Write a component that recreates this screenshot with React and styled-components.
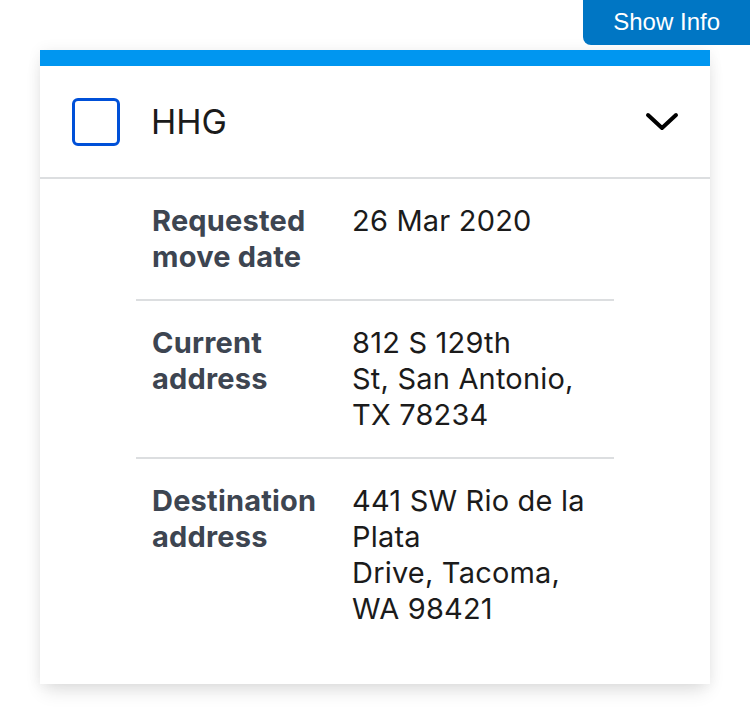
import React from "react";
import styled, { createGlobalStyle } from "styled-components";

const GlobalStyle = createGlobalStyle`
  body {
    margin: 0;
    background: #fff;
    font-family: Inter, "Noto Sans", sans-serif;
    color: #1b1b1b;
  }
`;

const rows = [
  { label: "Requested move date", value: ["26 Mar 2020"] },
  { label: "Current address", value: ["812 S 129th", "St, San Antonio, TX 78234"] },
  { label: "Destination address", value: ["441 SW Rio de la Plata", "Drive, Tacoma, WA 98421"] },
];

function App() {
  return (
    <Page>
      <GlobalStyle />
      <InfoButton>Show Info</InfoButton>
      <Card>
        <Header>
          <Checkbox type="checkbox" aria-label="HHG" />
          <Title>HHG</Title>
          <Toggle aria-label="Collapse">
            <svg width="36" height="22" viewBox="0 0 36 22">
              <polyline points="4,4 18,17 32,4" fill="none" stroke="#000" strokeWidth="4" strokeLinecap="round" strokeLinejoin="round" />
            </svg>
          </Toggle>
        </Header>
        <Body>
          <Table>
            <tbody>
              {rows.map((r) => (
                <Row key={r.label}>
                  <Label>{r.label}</Label>
                  <Value>
                    {r.value.map((v) => (
                      <div key={v}>{v}</div>
                    ))}
                  </Value>
                </Row>
              ))}
            </tbody>
          </Table>
        </Body>
      </Card>
    </Page>
  );
}

export default App;

const Page = styled.div`
  position: relative;
  padding: 50px 40px 40px;
`;

const InfoButton = styled.button`
  position: absolute;
  top: 0;
  right: 0;
  height: 45px;
  padding: 0 30px 2px;
  border: none;
  border-radius: 0 0 0 8px;
  background: #0076c4;
  color: #fff;
  font-family: "Liberation Sans", Arial, sans-serif;
  font-size: 24px;
  cursor: pointer;
`;

const Card = styled.div`
  background: #fff;
  border-top: 16px solid #0096f0;
  box-shadow: 0 10px 18px -4px rgba(0, 0, 0, 0.12), 0 0 14px rgba(0, 0, 0, 0.06);
  padding-bottom: 33px;
`;

const Header = styled.div`
  display: flex;
  align-items: center;
  height: 111px;
  padding: 0 32px;
  border-bottom: 2px solid #dcdee0;
`;

const Checkbox = styled.input`
  appearance: none;
  margin: 0;
  width: 48px;
  height: 48px;
  border: 3px solid #0050d8;
  border-radius: 6px;
  box-sizing: border-box;
  background: #fff;
`;

const Title = styled.span`
  flex: 1;
  margin-left: 31px;
  font-size: 34px;
  color: #1b1b1b;
`;

const Toggle = styled.button`
  display: flex;
  padding: 0;
  border: none;
  background: none;
  margin-right: -2px;
`;

const Body = styled.div`
  padding: 0 96px;
`;

const Table = styled.table`
  width: 100%;
  border-collapse: collapse;
  font-size: 29px;
  letter-spacing: 0.2px;
  line-height: 36px;
`;

const Row = styled.tr`
  border-bottom: 2px solid #dcdee0;
  &:last-child {
    border-bottom: none;
  }
`;

const Label = styled.th`
  width: 168px;
  padding: 24px 16px 24px 16px;
  text-align: left;
  vertical-align: top;
  font-weight: 700;
  color: #3d4551;
`;

const Value = styled.td`
  padding: 24px 16px 24px 16px;
  vertical-align: top;
  color: #1b1b1b;
`;
